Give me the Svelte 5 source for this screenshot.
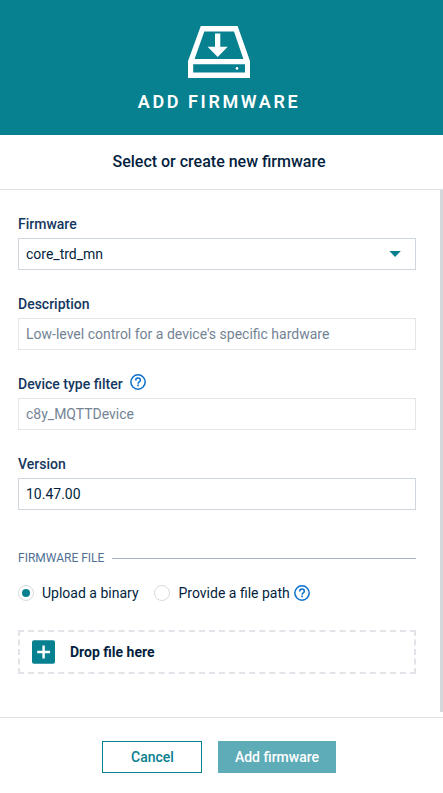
<script>
  let firmware = $state('core_trd_mn');
  let version = $state('10.47.00');
  let source = $state('binary');
</script>

{#snippet help()}
  <svg class="help" width="16" height="16" viewBox="0 0 16 16" fill="none" stroke="#0b6fcc" aria-label="Help">
    <circle cx="8" cy="8" r="7.15" stroke-width="1.5" />
    <path d="M5.7 6.4C5.7 4.9 6.6 4.1 8 4.1s2.3.8 2.3 2.1c0 1.7-2.2 1.8-2.2 3.5" stroke-width="1.5" />
    <path d="M8.05 10.6v1.6" stroke-width="1.6" />
  </svg>
{/snippet}

<div class="modal">
  <header>
    <svg width="62" height="52" viewBox="0 0 62 52" aria-hidden="true">
      <path
        fill="#fff"
        fill-rule="evenodd"
        d="M12.8 0H49.6L62 35V52H0V35ZM16.3 5.4L6.6 33.1H55.4L46 5.4ZM5.2 38.3V46.4H57V38.3Z"
      />
      <path fill="#fff" d="M27 7.4h5.3v13.3h7.4L29.7 31 19.6 20.7H27Z" />
      <circle cx="49" cy="42.4" r="1.3" fill="#fff" />
    </svg>
    <h1>ADD FIRMWARE</h1>
  </header>

  <div class="subtitle">Select or create new firmware</div>

  <main>
    <div class="content">
      <div class="group">
        <div class="label">Firmware</div>
        <div class="control select">
          <span>{firmware}</span>
          <svg width="12" height="6" viewBox="0 0 12 6"><path d="M0.4 0h11.4L6.1 6Z" fill="#07808f" /></svg>
        </div>
      </div>
      <div class="group">
        <div class="label">Description</div>
        <div class="control disabled">Low-level control for a device's specific hardware</div>
      </div>
      <div class="group">
        <div class="label">Device type filter <span class="hint">{@render help()}</span></div>
        <div class="control disabled">c8y_MQTTDevice</div>
      </div>
      <div class="group">
        <div class="label">Version</div>
        <div class="control">{version}</div>
      </div>

      <div class="legend"><span>FIRMWARE FILE</span></div>

      <div class="radios">
        <div class="radio" class:checked={source === 'binary'}><i></i><span>Upload a binary</span></div>
        <div class="radio path" class:checked={source === 'path'}><i></i><span>Provide a file path</span>{@render help()}</div>
      </div>

      <div class="drop">
        <svg width="23" height="24" viewBox="0 0 23 24">
          <rect y="0.3" width="23" height="23.4" rx="2" fill="#07808f" />
          <path d="M5.2 12h12.8M11.6 5.6v12.8" stroke="#fff" stroke-width="2.4" />
        </svg>
        <span>Drop file here</span>
      </div>
    </div>
    <div class="scrollbar"></div>
  </main>

  <footer>
    <button class="cancel">Cancel</button>
    <button class="primary">Add firmware</button>
  </footer>
</div>

<style>
  .modal {
    display: flex;
    flex-direction: column;
    width: 443px;
    height: 793px;
    box-sizing: border-box;
    overflow: hidden;
    background: #fff;
    color: #031f40;
    font: 14px/20px Roboto, 'Liberation Sans', sans-serif;
  }
  .modal * {
    box-sizing: border-box;
  }
  svg {
    display: block;
    flex: none;
  }
  header {
    display: flex;
    flex-direction: column;
    align-items: center;
    height: 135px;
    padding: 26px 5px 0 0;
    background: #07808f;
    color: #fff;
  }
  h1 {
    margin: 12px 0 0;
    font-size: 18px;
    line-height: 24px;
    font-weight: 600;
    letter-spacing: 2.6px;
  }
  .subtitle {
    height: 55px;
    padding: 16px 5px 0 0;
    border-bottom: 1px solid #dfe2e6;
    text-align: center;
    font-size: 16px;
    font-weight: 500;
    line-height: 22px;
  }
  main {
    display: flex;
    height: 527px;
  }
  .content {
    width: 440px;
    padding: 24px 24px 0 18px;
  }
  .scrollbar {
    width: 3px;
    height: 522px;
    background: #d5d8db;
  }
  .group {
    height: 80px;
  }
  .label {
    display: flex;
    height: 24px;
    font-weight: 500;
    color: #14375e;
  }
  .hint {
    margin: 0 0 0 7px;
  }
  .control {
    display: flex;
    align-items: center;
    height: 32px;
    padding: 0 7px;
    border: 1px solid #cfd6de;
  }
  .disabled {
    border-color: #e4e6ea;
    color: #738394;
  }
  .select {
    justify-content: space-between;
    padding-right: 14px;
  }
  .legend {
    display: flex;
    align-items: center;
    gap: 8px;
    height: 20px;
    margin-top: 14px;
    font-size: 12px;
    color: #4f7196;
  }
  .legend::after {
    content: '';
    flex: 1;
    height: 1px;
    background: #a3b4c8;
  }
  .radios {
    display: flex;
    gap: 15px;
    margin-top: 15px;
  }
  .radio {
    display: flex;
    align-items: center;
  }
  .radio i {
    display: flex;
    align-items: center;
    justify-content: center;
    width: 16px;
    height: 16px;
    margin-right: 8px;
    border: 1px solid #d5dae0;
    border-radius: 50%;
  }
  .path i {
    margin-right: 9px;
  }
  .checked i::after {
    content: '';
    width: 8px;
    height: 8px;
    border-radius: 50%;
    background: #07808f;
  }
  .radio .help {
    margin-left: 4px;
  }
  .drop {
    display: flex;
    align-items: center;
    gap: 15px;
    height: 44px;
    margin-top: 27px;
    padding-left: 12px;
    border: 2px dashed #e1e4e8;
    font-weight: 700;
  }
  footer {
    display: flex;
    flex: 1;
    justify-content: center;
    gap: 16px;
    padding: 23px 5px 0 0;
    border-top: 1px solid #dfe2e6;
  }
  button {
    height: 32px;
    padding: 0;
    border: 1px solid #07808f;
    background: #fff;
    color: #07808f;
    font: 500 14px/20px Roboto, 'Liberation Sans', sans-serif;
  }
  .cancel {
    width: 100px;
    padding-left: 1px;
  }
  .primary {
    width: 118px;
    border-color: #5eacb8;
    background: #5eacb8;
    color: #fff;
  }
</style>
